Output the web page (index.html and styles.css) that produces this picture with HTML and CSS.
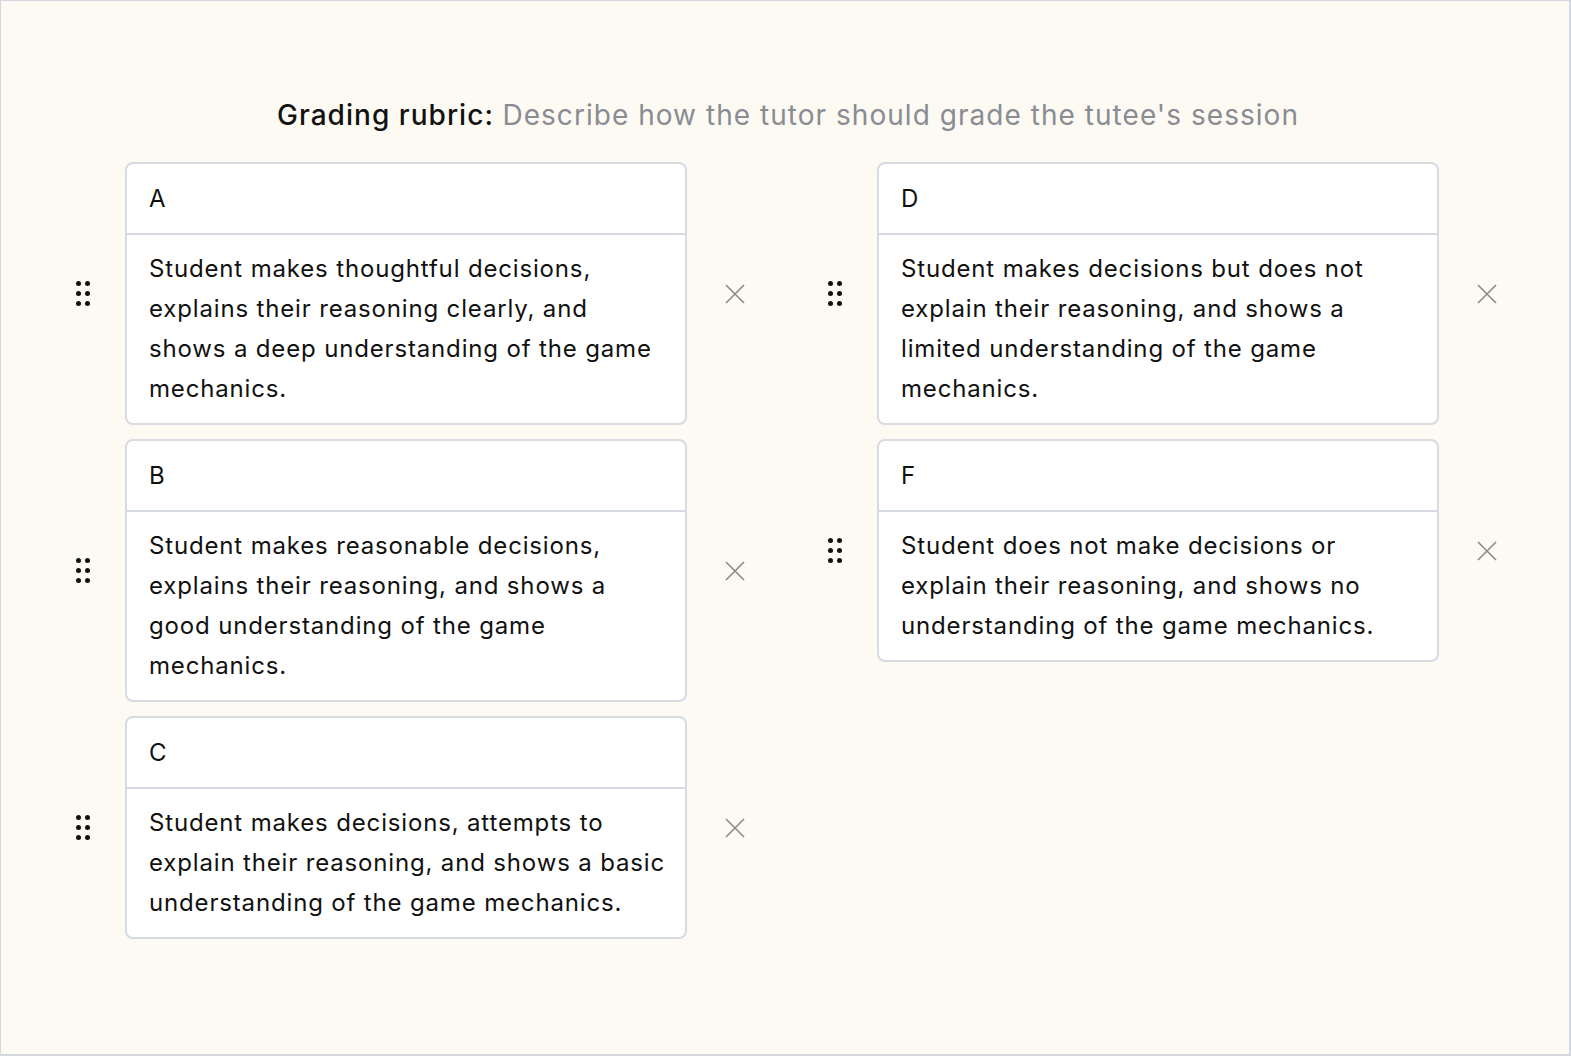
FILE: index.html
```html
<!DOCTYPE html>
<html lang="en">
<head>
    <meta charset="UTF-8">
    <meta name="viewport" content="width=device-width, initial-scale=1.0">
    <title>Grading rubric</title>
    <link rel="stylesheet" href="styles.css">
</head>
<body>
    <div class="frame">
        <h1 class="rubric-title">Grading rubric: <span class="rubric-hint">Describe how the tutor should grade the tutee's session</span></h1>

        <div class="rubric-grid">
            <div class="rubric-col">
                <div class="rubric-item">
                    <div class="drag-handle"><span></span><span></span><span></span><span></span><span></span><span></span></div>
                    <div class="grade-card">
                        <div class="grade-label">A</div>
                        <div class="grade-desc">Student makes thoughtful decisions, explains their reasoning clearly, and shows a deep understanding of the game mechanics.</div>
                    </div>
                    <button class="remove-btn" aria-label="Remove"><svg viewBox="0 0 20 20" width="20" height="20"><path d="M1 1 L19 19 M19 1 L1 19" /></svg></button>
                </div>
                <div class="rubric-item">
                    <div class="drag-handle"><span></span><span></span><span></span><span></span><span></span><span></span></div>
                    <div class="grade-card">
                        <div class="grade-label">B</div>
                        <div class="grade-desc">Student makes reasonable decisions, explains their reasoning, and shows a good understanding of the game mechanics.</div>
                    </div>
                    <button class="remove-btn" aria-label="Remove"><svg viewBox="0 0 20 20" width="20" height="20"><path d="M1 1 L19 19 M19 1 L1 19" /></svg></button>
                </div>
                <div class="rubric-item">
                    <div class="drag-handle"><span></span><span></span><span></span><span></span><span></span><span></span></div>
                    <div class="grade-card">
                        <div class="grade-label">C</div>
                        <div class="grade-desc">Student makes decisions, attempts to explain their reasoning, and shows a basic understanding of the game mechanics.</div>
                    </div>
                    <button class="remove-btn" aria-label="Remove"><svg viewBox="0 0 20 20" width="20" height="20"><path d="M1 1 L19 19 M19 1 L1 19" /></svg></button>
                </div>
            </div>

            <div class="rubric-col">
                <div class="rubric-item">
                    <div class="drag-handle"><span></span><span></span><span></span><span></span><span></span><span></span></div>
                    <div class="grade-card">
                        <div class="grade-label">D</div>
                        <div class="grade-desc">Student makes decisions but does not explain their reasoning, and shows a limited understanding of the game mechanics.</div>
                    </div>
                    <button class="remove-btn" aria-label="Remove"><svg viewBox="0 0 20 20" width="20" height="20"><path d="M1 1 L19 19 M19 1 L1 19" /></svg></button>
                </div>
                <div class="rubric-item">
                    <div class="drag-handle"><span></span><span></span><span></span><span></span><span></span><span></span></div>
                    <div class="grade-card">
                        <div class="grade-label">F</div>
                        <div class="grade-desc">Student does not make decisions or explain their reasoning, and shows no understanding of the game mechanics.</div>
                    </div>
                    <button class="remove-btn" aria-label="Remove"><svg viewBox="0 0 20 20" width="20" height="20"><path d="M1 1 L19 19 M19 1 L1 19" /></svg></button>
                </div>
            </div>
        </div>
    </div>
</body>
</html>
```

FILE: styles.css
```css
* { box-sizing: border-box; }
html, body { margin: 0; padding: 0; }
body { font-family: Inter, "Noto Sans", sans-serif; color: #111; background: #fff; }

.frame {
    width: 1571px; height: 1056px;
    background: #fdfaf3;
    border: 1px solid #d5d8de;
    border-width: 1px 2px 2px 1px;
    padding-top: 96px;
}

.rubric-title {
    margin: 0 0 29px; padding-left: 6px; text-align: center;
    font-size: 28px; line-height: 36px; font-weight: 500; color: #111;
    letter-spacing: 0.037em;
}
.rubric-hint { color: #898c91; font-weight: 400; }

.rubric-grid { display: flex; gap: 60px; padding-left: 62px; }
.rubric-col { display: flex; flex-direction: column; gap: 14px; }

.rubric-item { display: flex; align-items: center; }

.drag-handle {
    width: 40px; margin-right: 22px;
    display: grid; grid-template-columns: 5px 5px; gap: 5px 4px;
    justify-content: center; align-content: center;
}
.drag-handle span { width: 5px; height: 5px; border-radius: 50%; background: #111; }

.grade-card {
    width: 562px; background: #fff;
    border: 2px solid #d6dae1; border-radius: 8px;
}
.grade-label {
    height: 71px; padding: 0 22px; line-height: 69px;
    font-size: 24px; border-bottom: 2px solid #d6dae1;
    letter-spacing: 0.035em;
}
.grade-desc {
    padding: 14px 17px 14px 22px; font-size: 24px; line-height: 40px;
    letter-spacing: 0.035em;
}

.remove-btn {
    width: 40px; height: 40px; margin-left: 28px; padding: 0;
    border: none; background: none; cursor: pointer;
    display: flex; align-items: center; justify-content: center;
}
.remove-btn svg path { stroke: #8a8a8a; stroke-width: 1.6; fill: none; }
```
